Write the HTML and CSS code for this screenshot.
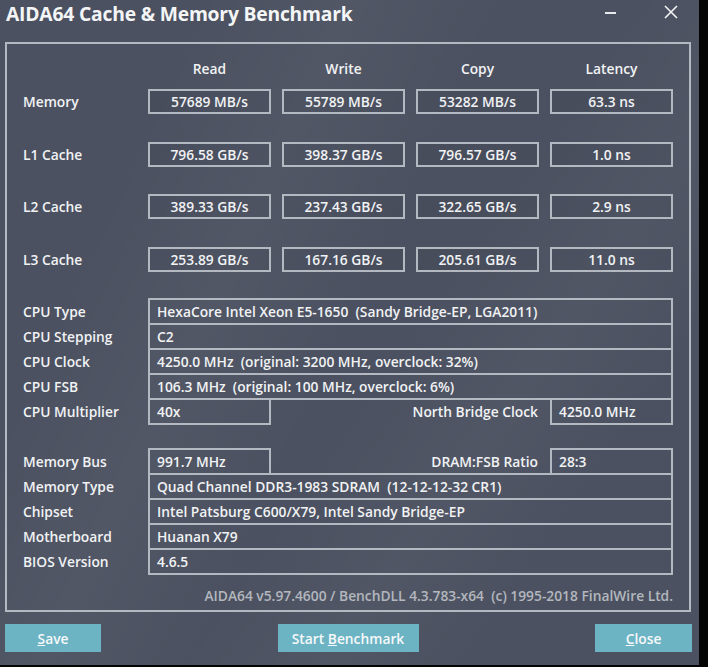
FILE: index.html
```html
<!DOCTYPE html>
<html lang="en">
<head>
    <meta charset="UTF-8">
    <title>AIDA64 Cache &amp; Memory Benchmark</title>
    <link rel="stylesheet" href="styles.css">
</head>
<body>

<div class="window">
    <!-- Pasek tytulu -->
    <div class="titlebar">
        <div class="title">AIDA64 Cache &amp; Memory Benchmark</div>
        <div class="controls">
            <span class="minimize"></span>
            <svg class="close-x" width="14" height="14" viewBox="0 0 14 14">
                <path d="M1 1 L13 13 M13 1 L1 13" stroke="#f2f3f5" stroke-width="1.6" fill="none"/>
            </svg>
        </div>
    </div>

    <div class="frame">
        <!-- Wyniki benchmarku -->
        <div class="heads">
            <div></div>
            <div class="head">Read</div>
            <div class="head">Write</div>
            <div class="head">Copy</div>
            <div class="head">Latency</div>
        </div>

        <div class="results">
            <div class="label">Memory</div>
            <div class="box">57689 MB/s</div>
            <div class="box">55789 MB/s</div>
            <div class="box">53282 MB/s</div>
            <div class="box">63.3 ns</div>

            <div class="label">L1 Cache</div>
            <div class="box">796.58 GB/s</div>
            <div class="box">398.37 GB/s</div>
            <div class="box">796.57 GB/s</div>
            <div class="box">1.0 ns</div>

            <div class="label">L2 Cache</div>
            <div class="box">389.33 GB/s</div>
            <div class="box">237.43 GB/s</div>
            <div class="box">322.65 GB/s</div>
            <div class="box">2.9 ns</div>

            <div class="label">L3 Cache</div>
            <div class="box">253.89 GB/s</div>
            <div class="box">167.16 GB/s</div>
            <div class="box">205.61 GB/s</div>
            <div class="box">11.0 ns</div>
        </div>

        <!-- Informacje o CPU -->
        <div class="info">
            <div class="info-row">
                <div class="label">CPU Type</div>
                <div class="val wide">HexaCore Intel Xeon E5-1650&nbsp; (Sandy Bridge-EP, LGA2011)</div>
            </div>
            <div class="info-row">
                <div class="label">CPU Stepping</div>
                <div class="val wide">C2</div>
            </div>
            <div class="info-row">
                <div class="label">CPU Clock</div>
                <div class="val wide">4250.0 MHz&nbsp; (original: 3200 MHz, overclock: 32%)</div>
            </div>
            <div class="info-row">
                <div class="label">CPU FSB</div>
                <div class="val wide">106.3 MHz&nbsp; (original: 100 MHz, overclock: 6%)</div>
            </div>
            <div class="info-row">
                <div class="label">CPU Multiplier</div>
                <div class="val">40x</div>
                <div class="label right">North Bridge Clock</div>
                <div class="val">4250.0 MHz</div>
            </div>
        </div>

        <!-- Informacje o pamieci -->
        <div class="info">
            <div class="info-row">
                <div class="label">Memory Bus</div>
                <div class="val">991.7 MHz</div>
                <div class="label right">DRAM:FSB Ratio</div>
                <div class="val">28:3</div>
            </div>
            <div class="info-row">
                <div class="label">Memory Type</div>
                <div class="val wide">Quad Channel DDR3-1983 SDRAM&nbsp; (12-12-12-32 CR1)</div>
            </div>
            <div class="info-row">
                <div class="label">Chipset</div>
                <div class="val wide">Intel Patsburg C600/X79, Intel Sandy Bridge-EP</div>
            </div>
            <div class="info-row">
                <div class="label">Motherboard</div>
                <div class="val wide">Huanan X79</div>
            </div>
            <div class="info-row">
                <div class="label">BIOS Version</div>
                <div class="val wide">4.6.5</div>
            </div>
        </div>

        <div class="footer">AIDA64 v5.97.4600 / BenchDLL 4.3.783-x64&nbsp; (c) 1995-2018 FinalWire Ltd.</div>
    </div>

    <!-- Przyciski -->
    <div class="buttons">
        <button class="btn save"><u>S</u>ave</button>
        <button class="btn start">Start <u>B</u>enchmark</button>
        <button class="btn close"><u>C</u>lose</button>
    </div>
</div>

</body>
</html>
```

FILE: styles.css
```css
body {
    margin: 0;
    width: 708px;
    height: 667px;
    background-color: #050505;
    font-family: "Open Sans", "Noto Sans", sans-serif;
    color: #f1f2f4;
    overflow: hidden;
}

.window {
    width: 699px;
    height: 665px;
    background-color: #4b5160;
    background-image:
        linear-gradient(115deg, rgba(255, 255, 255, 0) 20%, rgba(255, 255, 255, 0.035) 35%, rgba(255, 255, 255, 0) 50%),
        linear-gradient(125deg, rgba(255, 255, 255, 0) 55%, rgba(255, 255, 255, 0.03) 68%, rgba(255, 255, 255, 0) 80%);
    box-sizing: border-box;
}

.titlebar {
    height: 42px;
    display: flex;
    justify-content: space-between;
    align-items: flex-start;
    padding-left: 6px;
}

.title {
    font-size: 19.3px;
    font-weight: 700;
    line-height: 28px;
    letter-spacing: -0.2px;
    color: #f4f5f7;
}

.controls {
    display: flex;
    align-items: center;
    height: 24px;
    padding-right: 21px;
}

.minimize {
    width: 11px;
    height: 1.5px;
    background-color: #e8e9ec;
    margin-right: 48px;
    margin-top: 2px;
}

.close-x {
    display: block;
    margin-top: -1px;
}

.frame {
    margin-left: 5px;
    width: 686px;
    height: 570px;
    border: 2px solid #b4b8c0;
    box-sizing: border-box;
    padding: 15px 16px 0 16px;
}

.heads,
.results,
.info-row {
    display: grid;
    grid-template-columns: 114px repeat(4, 123px);
    column-gap: 11px;
}

.heads {
    margin-bottom: 10px;
}

.head {
    text-align: center;
    font-size: 13.8px;
    font-weight: 600;
    line-height: 20px;
}

.results {
    row-gap: 27.7px;
    margin-bottom: 26px;
}

.label {
    font-size: 13.8px;
    font-weight: 600;
    line-height: 25px;
    white-space: nowrap;
}

.label.right {
    grid-column: span 2;
    text-align: right;
    padding-right: 1px;
}

.box {
    border: 2px solid #b4b8c0;
    box-sizing: border-box;
    height: 25px;
    line-height: 21px;
    text-align: center;
    font-size: 13.8px;
    font-weight: 600;
    background-color: rgba(0, 0, 0, 0.04);
}

.info {
    margin-bottom: 23px;
}

.info-row {
    height: 27px;
}

.info-row + .info-row {
    margin-top: -2px;
}

.info-row .label {
    line-height: 27px;
}

.val {
    border: 2px solid #b4b8c0;
    box-sizing: border-box;
    height: 27px;
    line-height: 23px;
    padding-left: 7px;
    font-size: 13.8px;
    font-weight: 600;
    white-space: nowrap;
}

.val.wide {
    grid-column: span 4;
}

.footer {
    text-align: right;
    font-size: 13.8px;
    font-weight: 600;
    color: #b3b7be;
    margin-top: -12px;
    line-height: 20px;
}

.buttons {
    display: flex;
    justify-content: space-between;
    width: 687px;
    margin-left: 5px;
    margin-top: 12px;
}

.btn {
    height: 28px;
    border: none;
    background-color: #6cb3c3;
    color: #f6f9fa;
    font-family: "Open Sans", "Noto Sans", sans-serif;
    font-size: 13.8px;
    font-weight: 600;
    padding: 0;
}

.btn.save {
    width: 96px;
}

.btn.start {
    width: 141px;
}

.btn.close {
    width: 97px;
}
```
